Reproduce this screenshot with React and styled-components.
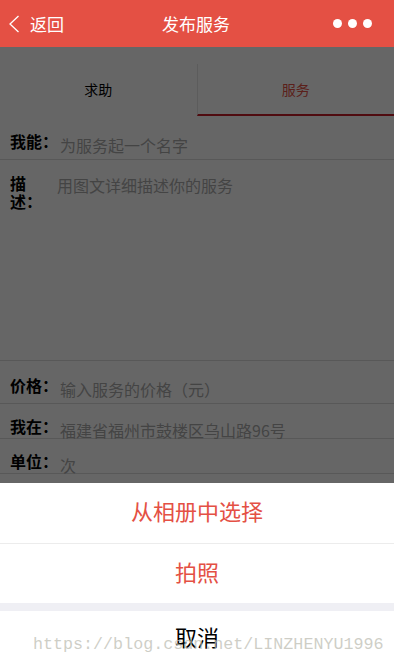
import React from 'react';
import styled, { createGlobalStyle } from 'styled-components';

const GlobalStyle = createGlobalStyle`
  html, body {
    margin: 0;
    padding: 0;
    height: 665px;
    overflow: hidden;
    background: #fff;
  }
  body {
    font-family: "Noto Sans CJK SC", "Noto Sans", sans-serif;
  }
`;

const Page = styled.div`
  position: relative;
  width: 394px;
  height: 665px;
  display: flex;
  flex-direction: column;
  background: #fff;
  overflow: hidden;
`;

const NavBar = styled.header`
  position: relative;
  z-index: 3;
  height: 47px;
  flex-shrink: 0;
  background: #e45044;
  color: #fff;
  display: flex;
  align-items: center;
  padding: 0 10px 0 8px;
`;

const BackButton = styled.div`
  display: flex;
  align-items: center;
  gap: 10px;
  font-size: 17px;
  width: 110px;
`;

const Title = styled.div`
  flex: 1;
  text-align: center;
  font-size: 17px;
`;

const MoreDots = styled.div`
  width: 110px;
  display: flex;
  justify-content: flex-end;
  gap: 6px;
  padding-right: 12px;
  box-sizing: border-box;
`;

const Dot = styled.span`
  width: 9px;
  height: 9px;
  border-radius: 50%;
  background: #fff;
`;

const Tabs = styled.nav`
  margin-top: 17px;
  display: flex;
  height: 52px;
  border-bottom: 1px solid #fff;
`;

const Tab = styled.div`
  flex: 1;
  display: flex;
  align-items: center;
  justify-content: center;
  font-size: 14px;
  color: ${p => (p.$active ? '#e45044' : '#000')};
  border-left: ${p => (p.$active ? '1px solid #e6e6e6' : 'none')};
  border-bottom: 2px solid ${p => (p.$active ? '#c8202a' : 'transparent')};
`;

const Field = styled.div`
  display: flex;
  align-items: ${p => (p.$top ? 'flex-start' : 'center')};
  height: ${p => p.$h}px;
  padding: ${p => p.$pt}px 10px 0;
  border-bottom: 1px solid #dcdcdc;
  box-sizing: border-box;
  font-size: 16px;
`;

const Label = styled.label`
  font-weight: 700;
  color: #000;
  width: ${p => (p.$narrow ? '38px' : 'auto')};
  flex-shrink: 0;
  line-height: 1.1;
  margin-top: ${p => (p.$top ? '0' : '-4px')};
`;

const Value = styled.span`
  color: #ababab;
  margin-left: ${p => p.$gap || 0}px;
  margin-top: ${p => (p.$top ? '-2px' : '2px')};
`;

const Overlay = styled.div`
  position: absolute;
  inset: 47px 0 0 0;
  background: rgba(0, 0, 0, 0.6);
  z-index: 2;
`;

const Sheet = styled.div`
  position: absolute;
  left: 0;
  right: 0;
  top: 483px;
  z-index: 4;
  background: #efeff4;
`;

const SheetItem = styled.div`
  height: ${p => p.$h}px;
  box-sizing: border-box;
  padding-bottom: ${p => p.$pb || 0}px;
  display: flex;
  align-items: center;
  justify-content: center;
  background: #fff;
  font-size: 22px;
  line-height: 1;
  color: ${p => (p.$danger ? '#e45044' : '#000')};
  border-bottom: ${p => (p.$divider ? '1px solid #ececec' : 'none')};
  margin-top: ${p => p.$gapTop || 0}px;
`;

const Watermark = styled.div`
  position: absolute;
  left: 33px;
  top: 635px;
  z-index: 5;
  font-family: "Liberation Mono", monospace;
  font-size: 16.7px;
  color: rgba(190, 190, 180, 0.75);
  white-space: nowrap;
  pointer-events: none;
`;

export default function App() {
  return (
    <Page>
      <GlobalStyle />
      <NavBar>
        <BackButton>
          <svg width="12" height="18" viewBox="0 0 12 18" fill="none">
            <path d="M10.5 1 L2 9 L10.5 17" stroke="#fff" strokeWidth="1.3" />
          </svg>
          返回
        </BackButton>
        <Title>发布服务</Title>
        <MoreDots>
          <Dot />
          <Dot />
          <Dot />
        </MoreDots>
      </NavBar>

      <Tabs>
        <Tab>求助</Tab>
        <Tab $active>服务</Tab>
      </Tabs>

      <Field $h={43} $pt={11}>
        <Label>我能：</Label>
        <Value $gap={2}>为服务起一个名字</Value>
      </Field>
      <Field $h={201} $pt={15} $top>
        <Label $narrow $top>描述：</Label>
        <Value $gap={9} $top>用图文详细描述你的服务</Value>
      </Field>
      <Field $h={43} $pt={12}>
        <Label>价格：</Label>
        <Value $gap={2}>输入服务的价格（元）</Value>
      </Field>
      <Field $h={35} $pt={15}>
        <Label>我在：</Label>
        <Value $gap={2}>福建省福州市鼓楼区乌山路96号</Value>
      </Field>
      <Field $h={35} $pt={15}>
        <Label>单位：</Label>
        <Value $gap={2}>次</Value>
      </Field>

      <Overlay />

      <Sheet>
        <SheetItem $h={61} $pb={6} $danger $divider>从相册中选择</SheetItem>
        <SheetItem $h={59} $pb={5} $danger>拍照</SheetItem>
        <SheetItem $h={60} $pb={11} $gapTop={8}>取消</SheetItem>
      </Sheet>

      <Watermark>https://blog.csdn.net/LINZHENYU1996</Watermark>
    </Page>
  );
}
